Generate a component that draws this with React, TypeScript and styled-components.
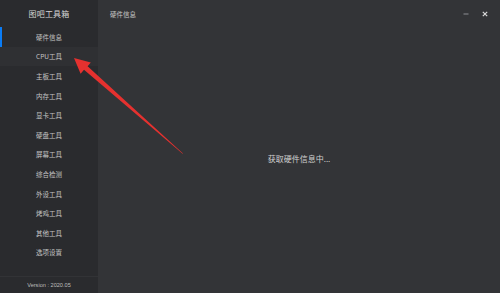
import React from 'react';
import styled, { createGlobalStyle } from 'styled-components';

const GlobalStyle = createGlobalStyle`
  html, body {
    margin: 0;
    padding: 0;
    background: #333437;
  }
  body {
    font-family: "Noto Sans CJK SC", "Liberation Sans", sans-serif;
  }
`;

const Window = styled.div`
  position: relative;
  display: flex;
  width: 500px;
  height: 293px;
  overflow: hidden;
  background: #333437;
`;

const Sidebar = styled.div`
  display: flex;
  flex-direction: column;
  width: 98px;
  background: #2a2b2e;
`;

const Brand = styled.div`
  height: 27px;
  display: flex;
  align-items: center;
  justify-content: center;
  color: #d4d4d4;
  font-size: 8px;
  letter-spacing: 0.2px;
`;

const NavList = styled.div`
  display: flex;
  flex-direction: column;
  flex: 1;
`;

const NavItem = styled.div<{ $active?: boolean; $hover?: boolean }>`
  position: relative;
  height: 19.6px;
  display: flex;
  align-items: center;
  justify-content: center;
  font-size: 6.5px;
  color: #c4c4c4;
  background: ${p => (p.$hover ? '#2f3033' : 'transparent')};

  &::before {
    content: '';
    display: ${p => (p.$active ? 'block' : 'none')};
    position: absolute;
    left: 0;
    top: 0;
    bottom: 0;
    width: 2px;
    background: #0a7cf5;
  }
`;

const Version = styled.div`
  height: 16px;
  border-top: 1px solid #323336;
  display: flex;
  align-items: center;
  justify-content: center;
  font-family: "Liberation Sans", sans-serif;
  font-size: 5.6px;
  color: #bdbdbd;
`;

const Main = styled.div`
  flex: 1;
  display: flex;
  flex-direction: column;
`;

const TitleBar = styled.div`
  height: 28px;
  display: flex;
  align-items: center;
  padding: 0 12px 0 12px;
`;

const Title = styled.div`
  flex: 1;
  font-size: 6.5px;
  color: #c8c8c8;
`;

const Controls = styled.div`
  display: flex;
  align-items: center;
  gap: 13px;
`;

const ControlButton = styled.div`
  width: 6px;
  height: 6px;
  display: flex;
  align-items: center;
  justify-content: center;
`;

const Content = styled.div`
  flex: 1;
  display: flex;
  align-items: center;
  justify-content: center;
  padding: 0 0 5px 0;
`;

const Loading = styled.div`
  font-size: 8px;
  color: #d0d0d0;
`;

const Annotation = styled.svg`
  position: absolute;
  left: 0;
  top: 0;
  pointer-events: none;
`;

const items = [
  '硬件信息', 'CPU工具', '主板工具', '内存工具', '显卡工具', '硬盘工具',
  '屏幕工具', '综合检测', '外设工具', '烤鸡工具', '其他工具', '选项设置',
];

export default function App() {
  return (
    <>
      <GlobalStyle />
      <Window>
        <Sidebar>
          <Brand>图吧工具箱</Brand>
          <NavList>
            {items.map((label, i) => (
              <NavItem key={label} $active={i === 0} $hover={i === 1}>{label}</NavItem>
            ))}
          </NavList>
          <Version>Version : 2020.05</Version>
        </Sidebar>
        <Main>
          <TitleBar>
            <Title>硬件信息</Title>
            <Controls>
              <ControlButton>
                <svg width="6" height="6" viewBox="0 0 6 6">
                  <rect x="0.5" y="2.5" width="5" height="1" fill="#8d8e93" />
                </svg>
              </ControlButton>
              <ControlButton>
                <svg width="6" height="6" viewBox="0 0 6 6">
                  <path d="M0.8 0.8 L5.2 5.2 M5.2 0.8 L0.8 5.2" stroke="#d8d8d8" strokeWidth="1.2" />
                </svg>
              </ControlButton>
            </Controls>
          </TitleBar>
          <Content>
            <Loading>获取硬件信息中...</Loading>
          </Content>
        </Main>
        <Annotation width="500" height="293" viewBox="0 0 500 293">
          <polygon
            points="183,153.5 87.6,66.2 90.8,62.6 74,58 80.6,73.8 84,69.8 182.6,153.8"
            fill="#e5312f"
          />
        </Annotation>
      </Window>
    </>
  );
}
